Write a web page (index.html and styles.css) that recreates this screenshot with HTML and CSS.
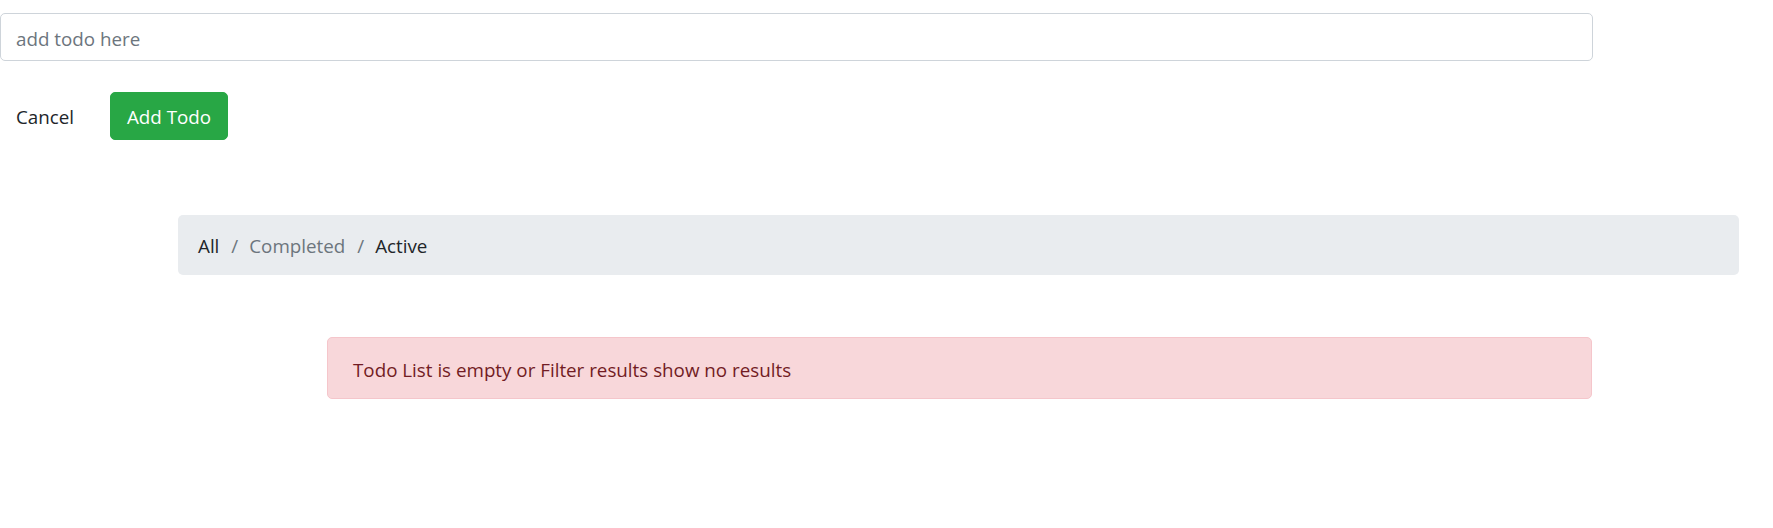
FILE: index.html
```html
<!DOCTYPE html>
<html lang="en">
<head>
<meta charset="utf-8">
<title>Todo</title>
<link rel="stylesheet" href="styles.css">
</head>
<body>
<div class="app">
  <form class="todo-form">
    <input class="form-control" type="text" placeholder="add todo here">
    <div class="actions">
      <button type="button" class="btn btn-cancel">Cancel</button>
      <button type="button" class="btn btn-success">Add Todo</button>
    </div>
  </form>
  <nav class="breadcrumb-wrap">
    <ol class="breadcrumb">
      <li class="crumb">All</li>
      <li class="crumb muted">Completed</li>
      <li class="crumb">Active</li>
    </ol>
  </nav>
  <div class="alert">Todo List is empty or Filter results show no results</div>
</div>
</body>
</html>
```

FILE: styles.css
```css
html, body {
  margin: 0;
  padding: 0;
  background: #fff;
}
body {
  font-family: "Open Sans", "Noto Sans", sans-serif;
  font-size: 18.8px;
  line-height: 30px;
  color: #212529;
}
.app {
  padding-top: 13px;
}
.todo-form {
  margin: 0;
  width: 1593px;
}
.form-control {
  display: block;
  box-sizing: border-box;
  width: 100%;
  height: 48px;
  padding: 9px 15px 5px;
  font: inherit;
  color: #495057;
  background: #fff;
  border: 1px solid #ced4da;
  border-radius: 5px;
  outline: none;
}
.form-control::placeholder {
  color: #6c757d;
}
.actions {
  display: flex;
  gap: 20px;
  margin-top: 31px;
}
.btn {
  box-sizing: border-box;
  height: 48px;
  padding: 9px 15px 7px;
  font: inherit;
  line-height: 30px;
  border: 1px solid transparent;
  border-radius: 5px;
  background: transparent;
  cursor: pointer;
}
.btn-cancel {
  color: #212529;
}
.btn-success {
  min-width: 118px;
  color: #fff;
  background: #28a745;
  border-color: #28a745;
}
.breadcrumb-wrap {
  margin: 75px 0 0 178px;
  width: 1561px;
}
.breadcrumb {
  display: flex;
  margin: 0;
  padding: 16px 20px 14px;
  list-style: none;
  background: #e9ecef;
  border-radius: 5px;
}
.crumb + .crumb::before {
  content: "/";
  color: #6c757d;
  padding: 0 11px 0 12px;
}
.muted {
  color: #6c757d;
}
.alert {
  box-sizing: border-box;
  margin: 62px 0 0 327px;
  width: 1265px;
  padding: 17px 25px 13px;
  color: #721c24;
  background: #f8d7da;
  border: 1px solid #f5c6cb;
  border-radius: 5px;
}
```
